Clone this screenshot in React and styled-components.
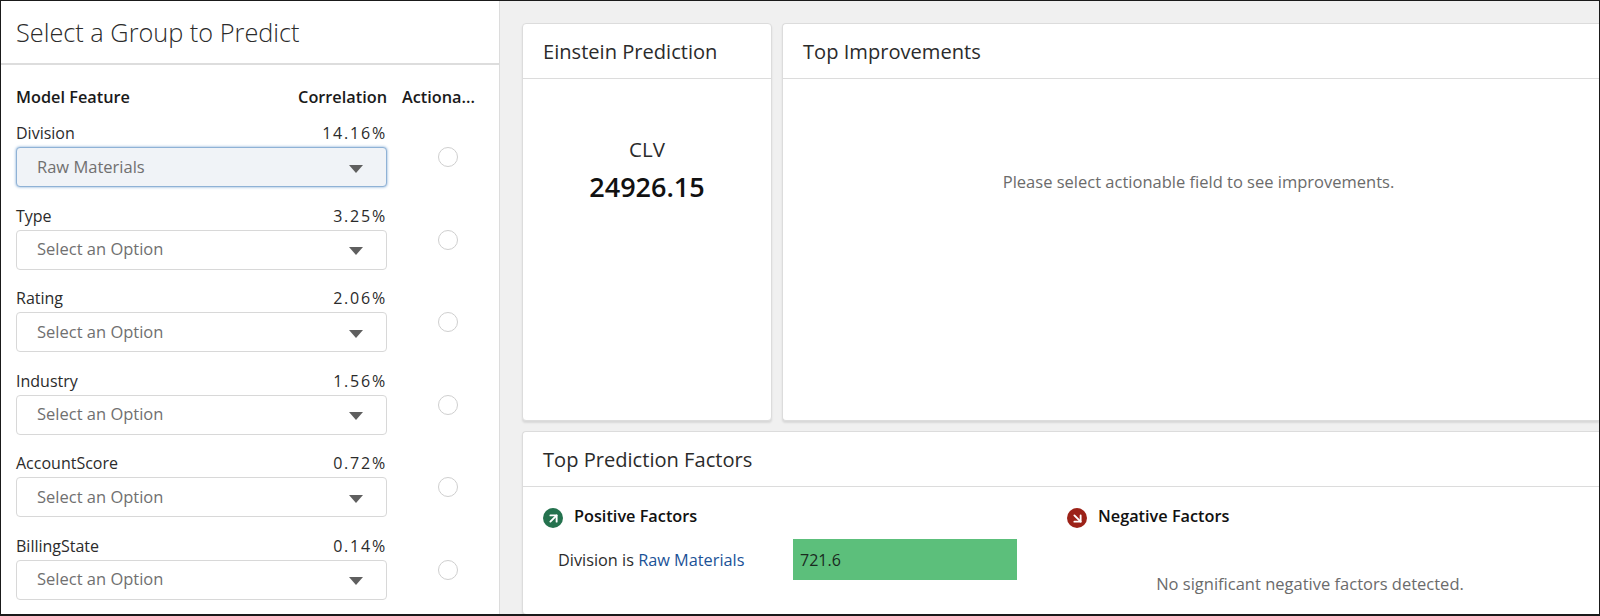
import React from 'react'
import styled, { createGlobalStyle } from 'styled-components'
import { ArrowUpRight, ArrowDownRight } from 'lucide-react'

const GlobalStyle = createGlobalStyle`
  html, body { margin: 0; padding: 0; background: #fff; }
  body { font-family: "Open Sans", "Liberation Sans", sans-serif; color: #16325c; }
`

const features = [
  { name: 'Division', pct: '14.16%', value: 'Raw Materials', active: true },
  { name: 'Type', pct: '3.25%' },
  { name: 'Rating', pct: '2.06%' },
  { name: 'Industry', pct: '1.56%' },
  { name: 'AccountScore', pct: '0.72%' },
  { name: 'BillingState', pct: '0.14%' },
]

const Frame = styled.div`
  width: 1600px;
  height: 616px;
  box-sizing: border-box;
  border: 1px solid #1a1a1a;
  border-bottom-width: 2px;
  display: flex;
  overflow: hidden;
  background: #f0f0f0;
`

const Sidebar = styled.aside`
  width: 499px;
  flex: none;
  background: #fff;
  border-right: 1px solid #dcdcdc;
  box-sizing: border-box;
`

const SidebarHead = styled.div`
  height: 64px;
  box-sizing: border-box;
  padding: 0 15px;
  display: flex;
  align-items: center;
  border-bottom: 2px solid #dddddd;
  font-size: 25.3px;
  font-weight: 300;
  color: #2b2b2b;
`

const SidebarBody = styled.div`
  padding: 22px 0 0 15px;
`

const Grid = styled.div`
  display: grid;
  grid-template-columns: 371px 77px;
  column-gap: 15px;
`

const ColHead = styled.div`
  font-size: 16.3px;
  font-weight: 600;
  line-height: 20px;
  color: #1a1a1a;
  white-space: nowrap;
  text-align: ${(props) => (props.right ? 'right' : 'left')};
`

const HeadRow = styled.div`
  display: flex;
  justify-content: space-between;
  margin-bottom: 16px;
`

const Row = styled(Grid)`
  height: 82.6px;
`

const LabelRow = styled.div`
  display: flex;
  justify-content: space-between;
  font-size: 16px;
  line-height: 20px;
  color: #2b2b2b;
  margin-bottom: 4px;
`

const Percent = styled.span`
  letter-spacing: 1.8px;
  margin-right: 0;
`

const Select = styled.div`
  height: 40px;
  box-sizing: border-box;
  border: 1px solid ${(props) => (props.active ? '#8fb2d6' : '#d8d8d8')};
  border-radius: 4px;
  background: ${(props) => (props.active ? '#f0f3f7' : '#fff')};
  box-shadow: ${(props) => (props.active ? '0 0 3px #7aa5d2' : 'none')};
  padding: 0 23px 2px 20px;
  display: flex;
  align-items: center;
  justify-content: space-between;
  font-size: 16.5px;
  color: #707070;
`

const Caret = styled.span`
  width: 0;
  height: 0;
  border-left: 7px solid transparent;
  border-right: 7px solid transparent;
  border-top: 8px solid #5f5f5f;
  margin-top: 5px;
`

const RadioCell = styled.div`
  padding: 24px 0 0 36px;
`

const Radio = styled.span`
  display: block;
  width: 20px;
  height: 20px;
  box-sizing: border-box;
  border: 1px solid #cfcfcf;
  border-radius: 50%;
  background: #fff;
`

const Main = styled.main`
  flex: 1;
  padding: 22px 0 0 22px;
  display: flex;
  flex-direction: column;
  gap: 10px;
  min-width: 0;
`

const TopRow = styled.div`
  display: flex;
  gap: 10px;
  height: 398px;
  flex: none;
`

const Card = styled.section`
  background: #fff;
  border: 1px solid #dcdcdc;
  border-right-width: ${(props) => (props.open ? 0 : '1px')};
  border-bottom-width: ${(props) => (props.cut ? 0 : '1px')};
  border-radius: ${(props) => (props.open ? '4px 0 0 4px' : '4px')};
  box-shadow: 0 2px 2px rgba(0, 0, 0, 0.1);
  box-sizing: border-box;
  display: flex;
  flex-direction: column;
  width: ${(props) => (props.small ? '250px' : 'auto')};
  flex: ${(props) => (props.small ? 'none' : 1)};
  min-height: 0;
`

const CardHead = styled.h2`
  margin: 0;
  height: 55px;
  flex: none;
  box-sizing: border-box;
  padding: 0 20px;
  display: flex;
  align-items: center;
  border-bottom: 1px solid #dcdcdc;
  font-size: 20.1px;
  font-weight: 400;
  color: #2b2b2b;
`

const PredictionBody = styled.div`
  padding-top: 57px;
  text-align: center;
`

const PredictionLabel = styled.div`
  font-size: 20.5px;
  line-height: 26px;
  color: #2b2b2b;
`

const PredictionValue = styled.div`
  font-size: 27px;
  font-weight: 600;
  line-height: 34px;
  margin-top: 8px;
  color: #111;
`

const Empty = styled.div`
  font-size: 16.5px;
  color: #6b6b6b;
  text-align: center;
`

const ImprovementBody = styled(Empty)`
  padding: 91px 0 0 15px;
`

const FactorsBody = styled.div`
  display: grid;
  grid-template-columns: 524px 1fr;
  padding: 19px 20px 0;
`

const FactorHead = styled.div`
  display: flex;
  align-items: flex-start;
  gap: 11px;
  font-size: 16.3px;
  font-weight: 600;
  line-height: 20px;
  color: #111;
`

const Badge = styled.span`
  width: 20px;
  height: 20px;
  margin-top: 2px;
  border-radius: 50%;
  background: ${(props) => props.color};
  color: #fff;
  display: flex;
  align-items: center;
  justify-content: center;
`

const FactorRow = styled.div`
  display: flex;
  align-items: center;
  margin: 11px 0 0 15px;
  font-size: 16.3px;
  color: #2b2b2b;
`

const FactorName = styled.div`
  width: 235px;
`

const FactorLink = styled.a`
  color: #1b5297;
`

const Bar = styled.div`
  width: 224px;
  height: 41px;
  box-sizing: border-box;
  padding-left: 7px;
  display: flex;
  align-items: center;
  background: #5cbf7b;
  font-size: 16px;
  color: #1a2a1f;
`

const NoFactors = styled(Empty)`
  padding-top: 44px;
  margin-left: -26px;
`

const App = () => {
  return (
    <>
      <GlobalStyle />
      <Frame>
        <Sidebar>
          <SidebarHead>Select a Group to Predict</SidebarHead>
          <SidebarBody>
            <Grid>
              <HeadRow>
                <ColHead>Model Feature</ColHead>
                <ColHead right>Correlation</ColHead>
              </HeadRow>
              <ColHead>Actiona...</ColHead>
            </Grid>
            {features.map((item) => (
              <Row key={item.name}>
                <div>
                  <LabelRow>
                    <span>{item.name}</span>
                    <Percent>{item.pct}</Percent>
                  </LabelRow>
                  <Select active={item.active}>
                    <span>{item.value || 'Select an Option'}</span>
                    <Caret />
                  </Select>
                </div>
                <RadioCell>
                  <Radio />
                </RadioCell>
              </Row>
            ))}
          </SidebarBody>
        </Sidebar>
        <Main>
          <TopRow>
            <Card small>
              <CardHead>Einstein Prediction</CardHead>
              <PredictionBody>
                <PredictionLabel>CLV</PredictionLabel>
                <PredictionValue>24926.15</PredictionValue>
              </PredictionBody>
            </Card>
            <Card open>
              <CardHead>Top Improvements</CardHead>
              <ImprovementBody>Please select actionable field to see improvements.</ImprovementBody>
            </Card>
          </TopRow>
          <Card open cut>
            <CardHead>Top Prediction Factors</CardHead>
            <FactorsBody>
              <div>
                <FactorHead>
                  <Badge color="#24724e">
                    <ArrowUpRight size={15} strokeWidth={3} />
                  </Badge>
                  Positive Factors
                </FactorHead>
                <FactorRow>
                  <FactorName>
                    Division is <FactorLink>Raw Materials</FactorLink>
                  </FactorName>
                  <Bar>721.6</Bar>
                </FactorRow>
              </div>
              <div>
                <FactorHead>
                  <Badge color="#9c2218">
                    <ArrowDownRight size={15} strokeWidth={3} />
                  </Badge>
                  Negative Factors
                </FactorHead>
                <NoFactors>No significant negative factors detected.</NoFactors>
              </div>
            </FactorsBody>
          </Card>
        </Main>
      </Frame>
    </>
  )
}

export default App
